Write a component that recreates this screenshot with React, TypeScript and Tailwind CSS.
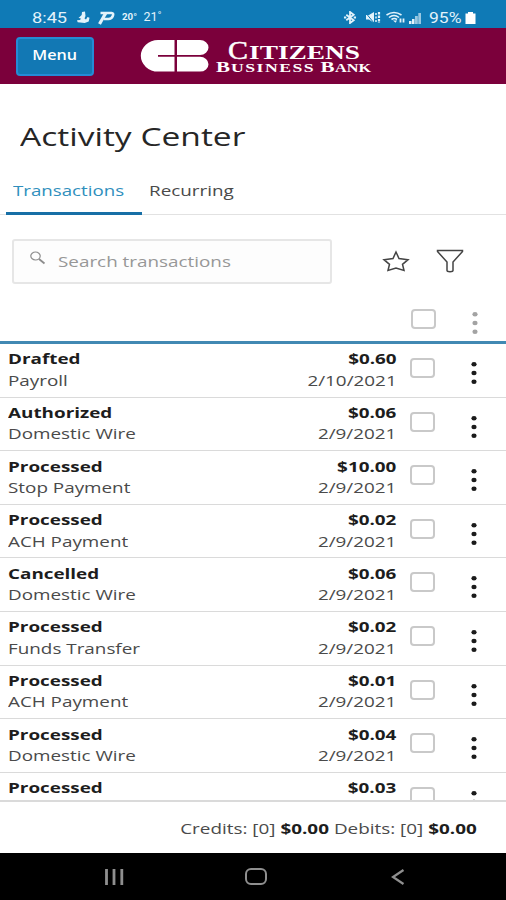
import type { ReactNode } from 'react';
import clsx from 'clsx';

interface Transaction {
  status: string;
  type?: string;
  amount: string;
  date?: string;
}

const transactions: Transaction[] = [
  { status: 'Drafted', type: 'Payroll', amount: '$0.60', date: '2/10/2021' },
  { status: 'Authorized', type: 'Domestic Wire', amount: '$0.06', date: '2/9/2021' },
  { status: 'Processed', type: 'Stop Payment', amount: '$10.00', date: '2/9/2021' },
  { status: 'Processed', type: 'ACH Payment', amount: '$0.02', date: '2/9/2021' },
  { status: 'Cancelled', type: 'Domestic Wire', amount: '$0.06', date: '2/9/2021' },
  { status: 'Processed', type: 'Funds Transfer', amount: '$0.02', date: '2/9/2021' },
  { status: 'Processed', type: 'ACH Payment', amount: '$0.01', date: '2/9/2021' },
  { status: 'Processed', type: 'Domestic Wire', amount: '$0.04', date: '2/9/2021' },
  { status: 'Processed', amount: '$0.03' },
];

function Wide({ children, className }: { children: ReactNode; className?: string }) {
  return (
    <span className={clsx('block whitespace-nowrap', className ?? 'origin-left scale-x-[1.3]')}>
      {children}
    </span>
  );
}

function Checkbox() {
  return <span className="block h-5 w-[25px] shrink-0 rounded-[4px] border-2 border-[#c9c9c9] bg-white" />;
}

function Dots({ className }: { className: string }) {
  return (
    <svg viewBox="0 0 6 24" className={clsx('h-6 w-1.5 shrink-0', className)} fill="currentColor">
      <ellipse cx="3" cy="3.2" rx="2.6" ry="2.2" />
      <ellipse cx="3" cy="12" rx="2.6" ry="2.2" />
      <ellipse cx="3" cy="20.8" rx="2.6" ry="2.2" />
    </svg>
  );
}

function StatusBar() {
  return (
    <div className="flex h-7 shrink-0 items-start justify-between bg-[#0f7ab6] pr-[30px] pl-8 text-[#e3f3fb]">
      <div className="flex h-7 items-center pt-[7px] font-['Roboto'] text-[14px] leading-none">
        <span className="block w-[45px]">
          <span className="block origin-left scale-x-[1.3]">8:45</span>
        </span>
        <svg viewBox="0 0 13 13" className="h-[13px] w-[13px]" fill="currentColor">
          <path d="M5 1 8 .5 8.5 5l-1 2.4L9 8.5 10.5 6l2 .8-.8 3.7-4 1.5-7-.8L0 9.3l3.2-.4.5-1.6-2.200-.4L4.700 4z" />
        </svg>
        <svg viewBox="0 0 18 14" className="ml-[7px] h-3.5 w-[18px]" fill="none" stroke="currentColor" strokeWidth="2.6">
          <path d="M3.500 2H14.500Q17 2.200 15.800 5 14.500 8 11.500 8H7" />
          <path d="M8.800 2 2.500 13" strokeWidth="3.2" />
        </svg>
        <span className="ml-[7px] block w-[21.5px] text-[9px] font-bold">
          <span className="block origin-left scale-x-[1.08]">20°</span>
        </span>
        <span className="block text-[12.5px]">21˚</span>
      </div>
      <div className="flex h-7 items-center pt-[7px]">
        <svg viewBox="0 0 14 14" className="mr-px ml-px h-[13px] w-[14px]" fill="none" stroke="currentColor" strokeWidth="1.9">
          <path d="M3 4l8 6-4 3V1l4 3-8 6" />
          <path d="M.5 7h2.500M11 7h2.500" strokeWidth="2" />
        </svg>
        <svg viewBox="0 0 16 13" className="ml-[7px] h-[13px] w-4" fill="none" stroke="currentColor">
          <path d="M1 4h3l5-3v11l-5-3.500H1z" fill="currentColor" stroke="none" />
          <path d="M0 1 9 12" stroke="#0f7ab6" />
          <path d="M11 2v10" strokeWidth="1.500" strokeDasharray="2 1.500" />
          <path d="M14 1v11" strokeWidth="2.200" strokeDasharray="2.500 1" />
        </svg>
        <svg viewBox="0 0 20 13" className="ml-[5px] h-[13px] w-5" fill="none" stroke="currentColor" strokeWidth="1.6">
          <path d="M.5 4Q8 -1 15.500 4M3 6.500Q8 2.500 13 6.500M5.500 8.500Q8.300 6.500 11 8.500" />
          <path d="M7 9.500l2.500 2.300L11 9.500z" fill="currentColor" stroke="none" />
          <path d="M14.500 7.500v4M17.500 7.500v4" strokeWidth="1.8" />
        </svg>
        <svg viewBox="0 0 14 12" className="ml-0.5 h-3 w-3.5" fill="currentColor">
          <path d="M1 9h2.500v3H1zM4 7h2.500v5H4z" />
          <path d="M7 4h2.800v8H7zM10.300 1H13v11h-2.700z" opacity=".65" />
        </svg>
        <span className="ml-[7px] block w-9 font-['Roboto'] text-[14px] leading-none">
          <span className="block origin-left scale-x-[1.25]">95%</span>
        </span>
        <svg viewBox="0 0 11 12" className="h-3 w-[11px]" fill="#fff">
          <path d="M3 0h5v1.500h2.500V12H.5V1.500H3z" />
        </svg>
      </div>
    </div>
  );
}

function BankLogo() {
  return (
    <svg
      viewBox="0 0 232 36"
      className="ml-[46px] h-9 w-[232px]"
      fill="#fff"
      fontFamily="'Liberation Serif', serif"
      fontWeight="700"
    >
      <path d="M34.500 2H18A17.200 15.800 0 0 0 18 33.600H34.500V18.800H18V17H34.500z" />
      <path d="M37 2H60A8.500 7.500 0 0 1 60 17H37zM37 18.800H60A8.500 7.400 0 0 1 60 33.600H37z" />
      <text x="88" y="21" fontSize="25" fontWeight="400" stroke="#fff" strokeWidth=".5" textLength="20" lengthAdjust="spacingAndGlyphs">C</text>
      <text x="109" y="21" fontSize="18.5" textLength="111" lengthAdjust="spacingAndGlyphs">ITIZENS</text>
      <text x="76" y="34" fontSize="14.5" textLength="14" lengthAdjust="spacingAndGlyphs">B</text>
      <text x="91" y="34" fontSize="12" letterSpacing="1" textLength="84" lengthAdjust="spacingAndGlyphs">USINESS</text>
      <text x="180.500" y="34" fontSize="14.5" textLength="14" lengthAdjust="spacingAndGlyphs">B</text>
      <text x="195" y="34" fontSize="12" textLength="36" lengthAdjust="spacingAndGlyphs">ANK</text>
    </svg>
  );
}

function TransactionRow({ status, type, amount, date }: Transaction) {
  return (
    <div className="flex h-[53.6px] shrink-0 border-b border-[#dadada] pr-[29px] pl-2">
      <div className="flex-1 pt-[4.4px] leading-[21.5px]">
        <Wide className="origin-left scale-x-[1.3] font-bold text-[#1d1d1d]">{status}</Wide>
        {type && <Wide>{type}</Wide>}
      </div>
      <div className="pt-[4.4px] text-right leading-[21.5px]">
        <Wide className="origin-right scale-x-[1.3] font-bold text-[#1d1d1d]">{amount}</Wide>
        {date && <Wide className="origin-right scale-x-[1.3]">{date}</Wide>}
      </div>
      <div className="ml-[13px] pt-3.5">
        <Checkbox />
      </div>
      <div className="ml-[36.5px] pt-[17px]">
        <Dots className="text-[#1b1b1b]" />
      </div>
    </div>
  );
}

export default function App() {
  return (
    <div className="flex h-[900px] w-[506px] flex-col overflow-hidden bg-white font-['Open_Sans',sans-serif] text-[14.5px] text-[#4a4a4a]">
      <StatusBar />

      <header className="flex h-14 shrink-0 items-center bg-[#7b003b] pl-4">
        <button className="flex h-[39px] w-[78px] items-center justify-center rounded-[4px] border-2 border-[#258bd5] bg-[#1278b4] pb-0.5 text-[13.5px] font-semibold text-white">
          <Wide className="origin-center scale-x-[1.2]">Menu</Wide>
        </button>
        <BankLogo />
      </header>

      <h1 className="mt-8 h-10 shrink-0 pl-5 text-[26px] leading-10 text-[#262626]">
        <Wide className="origin-left scale-x-[1.29]">Activity Center</Wide>
      </h1>

      <nav className="mt-3.5 flex h-[45px] shrink-0 border-b border-[#e2e2e2] pl-1.5">
        <div className="h-[45px] w-[136px] border-b-[3px] border-[#176fa6] pt-2.5 pl-[7px] text-[#2f8fbd]">
          <Wide className="origin-left scale-x-[1.29]">Transactions</Wide>
        </div>
        <div className="pt-2.5 pl-[7px]">
          <Wide>Recurring</Wide>
        </div>
      </nav>

      <div className="mt-6 flex h-[45px] shrink-0 pl-3">
        <div className="flex h-[45px] w-80 items-center rounded-[3px] border-2 border-[#e6e6e6] bg-[#fdfdfd] pl-4 text-[#979797]">
          <svg viewBox="0 0 16 14" className="mb-2 h-3.5 w-4" fill="none" stroke="#8c8c8c">
            <ellipse cx="5.500" cy="5" rx="4.700" ry="4" strokeWidth="1.2" />
            <path d="M9 8l5.500 4.500" strokeWidth="1.8" />
          </svg>
          <span className="ml-3 block">
            <Wide>Search transactions</Wide>
          </span>
        </div>
        <svg viewBox="0 0 28 24" className="mt-[11px] ml-[50px] h-6 w-7" fill="none" stroke="#444" strokeWidth="1.5">
          <path d="M14 2 17 8.500 26 9.700 20.500 14.300 22 20.500 14 18 6 20.500 7.500 14.300 2 9.700 11 8.500z" />
        </svg>
        <svg viewBox="0 0 28 26" className="mt-2.5 ml-[26px] h-[26px] w-7" fill="none" stroke="#444" strokeWidth="1.5">
          <path d="M1.500 1.500h25v1L17 13v8.500q0 1.200-3 1.200t-3-1.200V13L1.500 2.500z" />
        </svg>
      </div>

      <div className="flex h-[60px] shrink-0 items-start border-b-[3px] border-[#4189b3] pr-7">
        <div className="mt-[25px] ml-auto">
          <Checkbox />
        </div>
        <Dots className="mt-[27px] ml-[36.5px] text-[#a3a3a3]" />
      </div>

      <main className="flex min-h-0 flex-1 flex-col overflow-hidden">
        {transactions.map((transaction, index) => (
          <TransactionRow key={index} {...transaction} />
        ))}
      </main>

      <footer className="flex h-[53px] shrink-0 justify-end border-t-2 border-[#dadada] pt-4 pr-[29px]">
        <Wide className="origin-right scale-x-[1.302]">
          Credits: [0] <b className="text-[#1d1d1d]">$0.00</b> Debits: [0] <b className="text-[#1d1d1d]">$0.00</b>
        </Wide>
      </footer>

      <div className="flex h-[47px] shrink-0 items-center bg-black pl-[104px] text-[#8f8f8f]">
        <svg viewBox="0 0 20 16" className="h-4 w-5" fill="none" stroke="currentColor" strokeWidth="2.8">
          <path d="M2.500 0v16M10 0v16M17.800 0v16" />
        </svg>
        <span className="ml-[121px] block h-[17px] w-[22px] rounded-[6px] border-2 border-[#8f8f8f]" />
        <svg viewBox="0 0 14 16" className="ml-[124px] h-4 w-3.5" fill="none" stroke="currentColor" strokeWidth="2.2">
          <path d="M12.500 1 2 8l10.500 7" />
        </svg>
      </div>
    </div>
  );
}
